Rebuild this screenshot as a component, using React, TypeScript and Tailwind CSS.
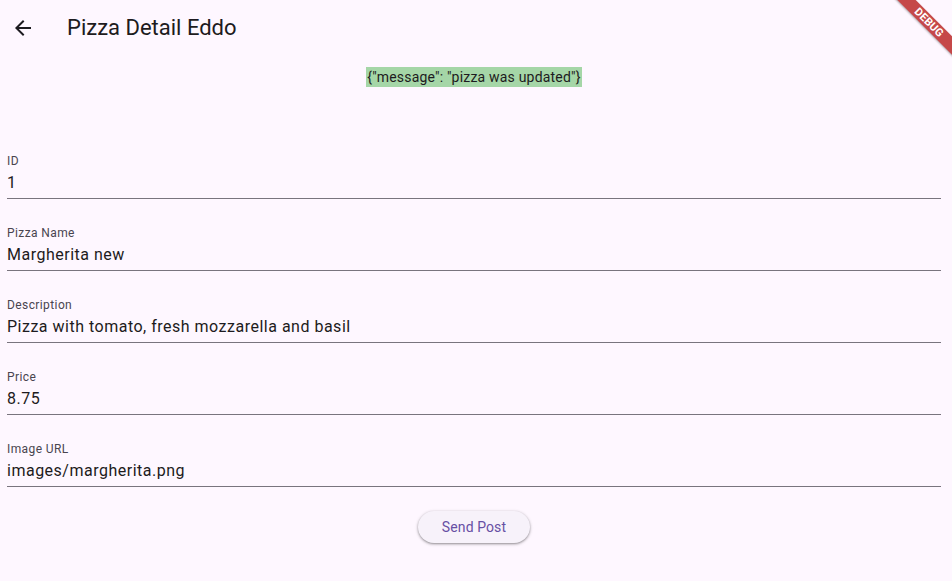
import React from "react";

const fields = [
  { label: "ID", value: "1" },
  { label: "Pizza Name", value: "Margherita new" },
  { label: "Description", value: "Pizza with tomato, fresh mozzarella and basil" },
  { label: "Price", value: "8.75" },
  { label: "Image URL", value: "images/margherita.png" },
];

function DebugBanner() {
  return (
    <div className="pointer-events-none absolute right-0 top-0 h-[60px] w-[60px] overflow-hidden">
      <div className="absolute left-[-13px] top-[16px] flex h-[13px] w-[100px] rotate-45 items-center justify-center bg-[#b71c1c]/80 shadow-[0_1px_2px_rgba(0,0,0,0.3)]">
        <span className="text-[11px] font-bold leading-none tracking-[0.2px] text-white">DEBUG</span>
      </div>
    </div>
  );
}

export default function App() {
  return (
    <div
      className="relative h-[581px] w-[952px] overflow-hidden bg-[#fef7ff] text-[#1d1b20]"
      style={{ fontFamily: "Roboto, 'Noto Sans', sans-serif" }}
    >
      <div className="w-[948px]">
        {/* app bar */}
        <div className="flex h-[56px] items-center">
          <div className="flex w-[46px] justify-center">
            <svg width="24" height="24" viewBox="0 0 24 24" className="text-[#1d1b20]">
              <path d="M20 11H7.83l5.59-5.59L12 4l-8 8 8 8 1.41-1.41L7.83 13H20v-2z" fill="currentColor" />
            </svg>
          </div>
          <h1 className="ml-[21px] text-[22px] leading-[28px] text-[#1d1b20]">Pizza Detail Eddo</h1>
        </div>

        {/* result message */}
        <div className="mt-[11px] flex justify-center">
          <span className="bg-[#a5d6a7] px-px text-[14px] leading-[20px] tracking-[0.2px] text-[#1d1b20]">
            {'{"message": "pizza was updated"}'}
          </span>
        </div>

        {/* form */}
        <div className="mt-[66px] flex flex-col gap-[26px] px-[7px]">
          {fields.map((f) => (
            <div key={f.label} className="flex flex-col border-b border-[#79747e] pb-[3px]">
              <span className="text-[12px] leading-[16px] tracking-[0.4px] text-[#49454f]">{f.label}</span>
              <span className="mt-[2px] text-[16px] leading-[24px] tracking-[0.5px] text-[#1d1b20]">{f.value}</span>
            </div>
          ))}
        </div>

        <div className="mt-[24px] flex justify-center">
          <button className="h-[32px] w-[112px] rounded-full bg-[#f7f2fa] text-[14px] tracking-[0.1px] text-[#6750a4] shadow-[0_1px_2px_rgba(0,0,0,0.3),0_1px_3px_1px_rgba(0,0,0,0.12)]">
            Send Post
          </button>
        </div>
      </div>

      <DebugBanner />
    </div>
  );
}
